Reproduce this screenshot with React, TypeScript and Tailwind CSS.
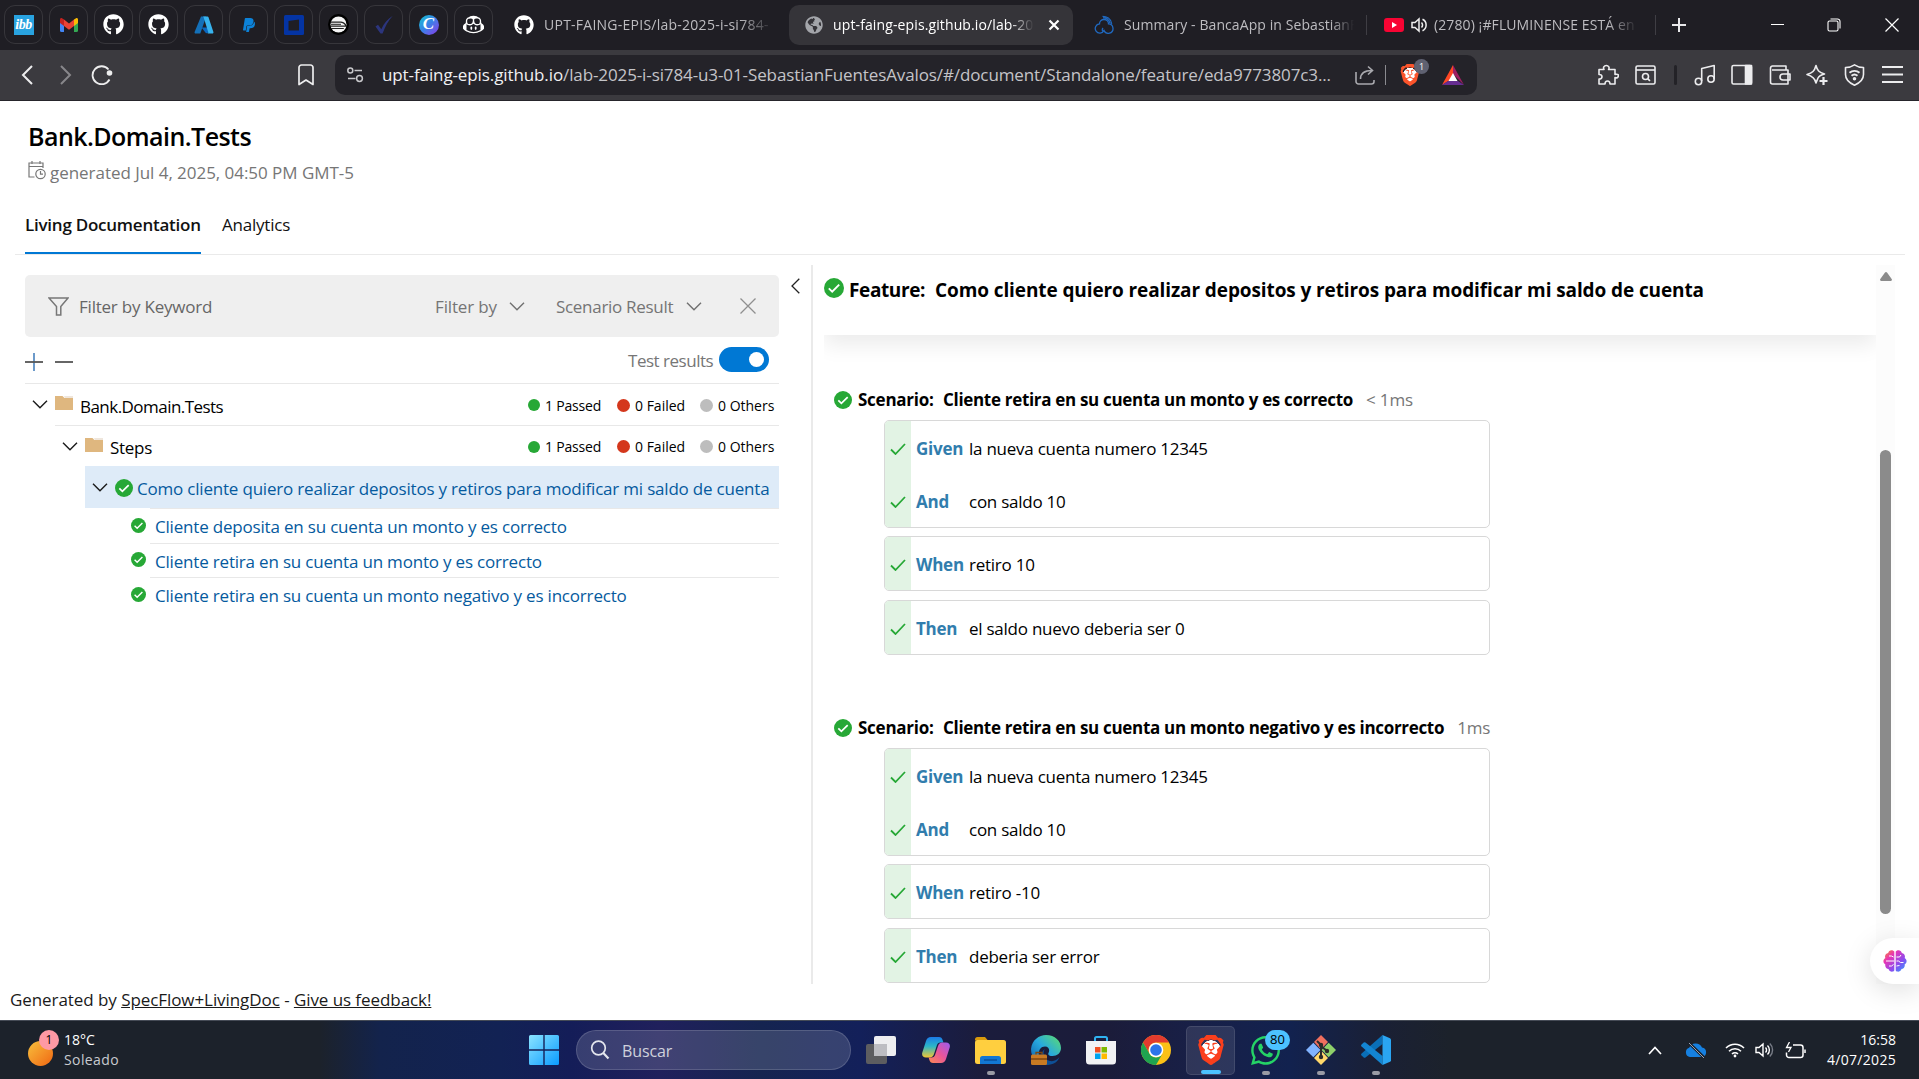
import type { ReactNode } from "react";
import { FaGithub, FaPaypal, FaWhatsapp, FaGlobeAmericas } from "react-icons/fa";
import { SiBrave, SiGithubcopilot } from "react-icons/si";

/* ---------- browser chrome ---------- */

function PinnedTab({ children }: { children: ReactNode }) {
  return (
    <div className="flex size-[39px] shrink-0 items-center justify-center rounded-[11px] border border-[#37363b] text-white">
      {children}
    </div>
  );
}

function GmailIcon() {
  return (
    <svg width="20" height="16" viewBox="0 0 20 16">
      <path d="M1 3v10.500a1.500 1.500 0 0 0 1.500 1.500H5V6z" fill="#4285f4" />
      <path d="M19 3v10.500a1.500 1.500 0 0 1-1.500 1.500H15V6z" fill="#34a853" />
      <path d="M15 2.500 17 1.200c1-.6 2 .2 2 1.300V6l-4 3z" fill="#fbbc04" />
      <path d="M5 2.500 3 1.200C2 .6 1 1.400 1 2.500V6l4 3z" fill="#c5221f" />
      <path d="M5 2.600 10 6.400l5-3.800V9l-5 3.800L5 9z" fill="#ea4335" />
    </svg>
  );
}

function AzureIcon() {
  return (
    <svg width="20" height="18" viewBox="0 0 20 18">
      <path d="M7 .5h5.200L6.300 17.500H1.600c-.8 0-1.300-.7-1-1.500z" fill="#1470b8" />
      <path d="M7.500 11.500h7l1.500 5-4 .8z" fill="#0b68c0" />
      <path d="M8.800.5h4.700c.5 0 .8.3 1 .7L19.400 16c.3.800-.3 1.500-1 1.500h-5.200c.8 0 1.300-.8 1-1.500L9.600 1.200C9.400.8 9.200.5 8.800.5z" fill="#37b3ee" />
    </svg>
  );
}

function TrainIcon() {
  return (
    <svg width="21" height="21" viewBox="0 0 21 21">
      <circle cx="10.500" cy="10.500" r="10.500" fill="#000" />
      <circle cx="10.500" cy="10.500" r="8" fill="#f4f4f4" />
      <path d="M2.500 8.200h10.500c3 .5 4.500 2 5 4H2.800" fill="none" stroke="#222" strokeWidth="1.300" />
      <path d="M3 10.300h10M2.800 14.500h13" stroke="#222" strokeWidth="1" />
    </svg>
  );
}

function CanvaIcon() {
  return (
    <span className="flex size-5 items-center justify-center rounded-full bg-linear-to-br from-[#00c4cc] via-[#3a7de8] to-[#7d2ae8] font-['Liberation_Serif',serif] text-[17px] leading-none font-bold italic">
      <span className="pb-[2px]">C</span>
    </span>
  );
}

function Tab({ icon, title, fade, width, active }: { icon: ReactNode; title: string; fade: string; width: string; active?: boolean }) {
  return (
    <>
      {icon}
      <span className={`${width} shrink-0 overflow-hidden text-[14px] whitespace-nowrap ${active ? "text-white" : "text-[#bdbcc0]"} ${fade}`}>{title}</span>
    </>
  );
}

function TabBar() {
  return (
    <div className="flex h-[50px] items-center bg-[#1f1e24] pb-px pl-1">
      <div className="flex gap-[6px]">
        <PinnedTab>
          <span className="flex size-5 items-center justify-center bg-[#29a3e0] font-['Liberation_Serif',serif] text-[14px] leading-none font-bold tracking-[-0.5px] italic">ibb</span>
        </PinnedTab>
        <PinnedTab><GmailIcon /></PinnedTab>
        <PinnedTab><FaGithub size={21} /></PinnedTab>
        <PinnedTab><FaGithub size={21} /></PinnedTab>
        <PinnedTab><AzureIcon /></PinnedTab>
        <PinnedTab><FaPaypal size={16} color="#0c82d8" /></PinnedTab>
        <PinnedTab>
          <svg width="20" height="20" viewBox="0 0 20 20">
            <rect width="20" height="20" rx="1.500" fill="#0434a4" />
            <path d="M4.500 6 15 4.500v11h-10.500z" fill="#1f1e24" />
          </svg>
        </PinnedTab>
        <PinnedTab><TrainIcon /></PinnedTab>
        <PinnedTab>
          <svg width="20" height="20" viewBox="0 0 20 20">
            <path d="M1.500 11.500 4 9.800l3.300 4.400C10 8.500 13.500 4 18.800.8 14 6 11 12 8.600 18.500H6.500z" fill="#2c357d" />
          </svg>
        </PinnedTab>
        <PinnedTab><CanvaIcon /></PinnedTab>
        <PinnedTab><SiGithubcopilot size={21} /></PinnedTab>
      </div>
      <div className="ml-[21px] flex w-[275px] items-center gap-[10px]">
        <Tab icon={<FaGithub size={20} className="shrink-0 text-white" />} title="UPT-FAING-EPIS/lab-2025-i-si784-" width="w-[230px]" fade="tracking-[0.25px] [mask-image:linear-gradient(to_right,black_85%,transparent)]" />
      </div>
      <div className="flex h-[40px] w-[284px] items-center gap-[10px] rounded-[10px] bg-[#353439] pl-4">
        <Tab icon={<FaGlobeAmericas size={18} className="shrink-0 text-[#a3a5aa]" />} title="upt-faing-epis.github.io/lab-2025" width="w-[201px]" fade="tracking-[0.12px] [mask-image:linear-gradient(to_right,black_88%,transparent)]" active />
        <svg width="12" height="12" viewBox="0 0 12 12" className="ml-[4px]" stroke="#fff" strokeWidth="2.200"><path d="M1.500 1.500l9 9M10.500 1.500l-9 9" /></svg>
      </div>
      <div className="ml-[21px] flex w-[272px] items-center gap-[10px]">
        <svg width="20" height="20" viewBox="0 0 20 20" fill="none" stroke="#2069c0" strokeWidth="1.300" className="shrink-0">
          <path d="M10 15.500a4.600 4.600 0 1 1-4.500-6.600c0-2.600 2-4.400 4.500-4.400s4.500 1.800 4.500 4.400A4.700 4.700 0 1 1 10 15.500c-1.200 2-2.500-.5-1-2.500" />
          <path d="M8.500 1.300c4 0 8.500 2.200 9.200 7.500M9 2.800c3.500 0 6 1.700 7 5.500" />
        </svg>
        <Tab icon={null} title="Summary - BancaApp in SebastianF" width="w-[230px]" fade="tracking-[0.09px] [mask-image:linear-gradient(to_right,black_90%,transparent)]" />
      </div>
      <div className="h-5 w-px bg-[#3f3e44]" />
      <div className="ml-[17px] flex w-[271px] items-center">
        <svg width="20" height="14" viewBox="0 0 20 14" className="shrink-0"><rect width="20" height="14" rx="3" fill="#f80433" /><path d="M8 4v6l5-3z" fill="#fff" /></svg>
        <svg width="16" height="16" viewBox="0 0 16 16" fill="none" stroke="#eee" strokeWidth="1.500" className="mr-[7px] ml-[7px] shrink-0">
          <path d="M1 5.500v5h3l4 3.500V2L4 5.500z" /><path d="M10.500 5.500a3.500 3.500 0 0 1 0 5M11.500 2.300a6.300 6.300 0 0 1 0 11.400" />
        </svg>
        <Tab icon={null} title="(2780) ¡#FLUMINENSE ESTÁ en" width="w-[204px]" fade="tracking-[0.1px] [mask-image:linear-gradient(to_right,black_85%,transparent)]" />
      </div>
      <div className="h-5 w-px bg-[#3f3e44]" />
      <svg width="14" height="14" viewBox="0 0 14 14" className="ml-[16px]" stroke="#e8e8ea" strokeWidth="2"><path d="M7 0v14M0 7h14" /></svg>
      <svg width="14" height="14" viewBox="0 0 14 14" className="ml-[85px]" stroke="#fff"><path d="M0 6.500h13" /></svg>
      <svg width="14" height="14" viewBox="0 0 14 14" className="ml-[42px]" fill="none" stroke="#fff" strokeWidth="1.100"><rect x="1" y="3" width="10" height="10" rx="1.500" /><path d="M3.500 1h7a2.500 2.500 0 0 1 2.500 2.500v7" /></svg>
      <svg width="14" height="14" viewBox="0 0 14 14" className="ml-[44px]" stroke="#fff" strokeWidth="1.200"><path d="M.5.5l13 13M13.500.5l-13 13" /></svg>
    </div>
  );
}

function ToolIcon({ children, className = "" }: { children: ReactNode; className?: string }) {
  return (
    <svg width="22" height="22" viewBox="0 0 22 22" fill="none" stroke="#ececee" strokeWidth="1.600" strokeLinejoin="round" className={`shrink-0 ${className}`}>
      {children}
    </svg>
  );
}

function AddressBar() {
  return (
    <div className="flex h-[51px] items-center border-b border-[#26252b] bg-[#3b3a3f]">
      <svg width="12" height="20" viewBox="0 0 12 20" className="ml-[21px]" fill="none" stroke="#ededee" strokeWidth="2"><path d="M11 1 2 10l9 9" /></svg>
      <svg width="12" height="20" viewBox="0 0 12 20" className="ml-[27px]" fill="none" stroke="#88878b" strokeWidth="2"><path d="M1 1l9 9-9 9" /></svg>
      <svg width="22" height="20" viewBox="0 0 22 20" className="ml-[19px]" fill="none" stroke="#ededee" strokeWidth="1.800"><path d="M18.500 14.500A9 9 0 1 1 17.500 4.500" /><circle cx="18.500" cy="8" r="2.800" fill="#ededee" stroke="none" /></svg>
      <svg width="16" height="22" viewBox="0 0 16 22" className="ml-[185px]" fill="none" stroke="#ededee" strokeWidth="1.700" strokeLinejoin="round"><path d="M1 3.500A2.500 2.500 0 0 1 3.500 1h9A2.500 2.500 0 0 1 15 3.500V20.500L8 16l-7 4.500z" /></svg>

      <div className="ml-[21px] flex h-10 w-[1142px] items-center rounded-[10px] bg-[#242329] pl-[12px]">
        <svg width="17" height="16" viewBox="0 0 17 16" fill="none" stroke="#c8c8cb" strokeWidth="1.500"><circle cx="3.300" cy="3.500" r="2.500" /><path d="M7.500 3.500H15M1 11.500h7.500" /><circle cx="12.500" cy="11.500" r="2.900" /></svg>
        <span className="ml-[18px] w-[973px] text-[17px] tracking-[-0.107px] whitespace-nowrap text-[#c4c4c8]">
          <span className="text-[#f0f0f2]">upt-faing-epis.github.io</span>/lab-2025-i-si784-u3-01-SebastianFuentesAvalos/#/document/Standalone/feature/eda9773807c3...
        </span>
        <svg width="20" height="20" viewBox="0 0 20 20" fill="none" stroke="#a9a9ae" strokeWidth="1.600"><path d="M1 7v9.500A2.500 2.500 0 0 0 3.500 19h13a2.500 2.500 0 0 0 2.500-2.500V15M5.500 14c0-5 3.500-8.500 11.500-8.500M13 1.500l4.500 4-4.500 4" /></svg>
        <div className="ml-[10px] h-5 w-px bg-[#8b8b90]" />
        <div className="relative ml-[13px] size-[22px]">
          <SiBrave size={22} color="#fb542b" className="absolute top-0 left-0 bg-[radial-gradient(circle,white_45%,transparent_46%)]" />
          <span className="absolute -top-[5px] left-[15px] flex size-[15px] items-center justify-center rounded-full bg-[#5f6171] text-[9px] text-white">1</span>
        </div>
        <svg width="22" height="20" viewBox="0 0 22 20" className="ml-[21px]"><path d="M11 0 0 20l11-7z" fill="#ff4724" /><path d="M11 0v9l11 11z" fill="#9e1f63" /><path d="M0 20h22l-6-4H6z" fill="#662d91" /><path d="M11 8 6.500 16h9z" fill="#fff" /></svg>
      </div>

      <ToolIcon className="ml-[120px]"><path d="M2 5.500h5c-.6-1-.7-1.600-.2-2.600a2.900 2.900 0 0 1 5 0c.5 1 .4 1.600-.2 2.600H18v5c3-1 4 .6 3 2.500-.6 1-1.600 1.200-3 .6V20h-5c0-2-1-3-2.500-3S8 18 8 20H2v-5c2 0 3-.8 3-2.300S4 10.500 2 10.500z" /></ToolIcon>
      <ToolIcon className="ml-[16px]"><rect x="1" y="2" width="19" height="18" rx="1.500" /><path d="M1 6h19" /><circle cx="10.500" cy="12.500" r="3" /><path d="m12.800 14.800 2.200 2" /></ToolIcon>
      <div className="ml-[17px] h-5 w-[3px] rounded bg-[#232227]" />
      <ToolIcon className="ml-[17px]"><circle cx="4.500" cy="17.500" r="3.200" /><circle cx="17" cy="15" r="3.200" /><path d="M7.700 17V4.500L20.200 1.500V15" /></ToolIcon>
      <ToolIcon className="ml-[15px]"><rect x="1" y="1.500" width="19.500" height="18.500" rx="1.500" /><rect x="14.500" y="1.500" width="6" height="18.500" fill="#ececee" /></ToolIcon>
      <ToolIcon className="ml-[16px]"><path d="M17 5.500V2H3.500a2 2 0 0 0-2 2v14a2 2 0 0 0 2 2H19V6H3" /><path d="M21 10h-7a3 3 0 0 0 0 6h7z" /></ToolIcon>
      <ToolIcon className="ml-[15px]"><path d="M10 1.500c1.200 5 3 7 8.500 8.500-4 1-5.500 2-6.500 4l-2 5c-1-5-3.500-7-9-8.500 5.500-1.500 7.500-3.500 9-9z" /><path d="M17.500 13v8M13.500 17h8" strokeWidth="2.200" /></ToolIcon>
      <ToolIcon className="ml-[16px]"><path d="M10.500.8c3 2 6 2.700 9 2.700v7c0 5-4 8.500-9 10.700-5-2.200-9-5.700-9-10.700v-7c3 0 6-.7 9-2.700z" /><path d="M5.500 8.800a7.500 7.500 0 0 1 10 0M7.500 11.800a4.600 4.600 0 0 1 6 0" strokeWidth="1.900" /><circle cx="10.500" cy="14.800" r="1" fill="#ececee" /></ToolIcon>
      <ToolIcon className="ml-[16px]"><path d="M0 3h21M0 10.500h21M0 18h21" strokeWidth="2" /></ToolIcon>
    </div>
  );
}

/* ---------- document ---------- */

function PassedIcon({ className }: { className: string }) {
  return (
    <svg viewBox="0 0 20 20" className={`shrink-0 ${className}`}>
      <circle cx="10" cy="10" r="10" fill="#27a836" />
      <path d="m4.800 10.400 3.400 3.300 7-7" fill="none" stroke="#fff" strokeWidth="1.900" />
    </svg>
  );
}

function Chevron({ className, color = "#1a1a1a" }: { className?: string; color?: string }) {
  return (
    <svg width="16" height="9" viewBox="0 0 16 9" className={`shrink-0 ${className ?? ""}`} fill="none" stroke={color} strokeWidth="1.400">
      <path d="M1 .8l7 7 7-7" />
    </svg>
  );
}

function Folder() {
  return (
    <svg width="18" height="14" viewBox="0 0 18 14" className="-mt-[3px] ml-[7px] shrink-0">
      <path d="M0 0h7.500l2 2H18v12H0z" fill="#dfb77f" />
      <path d="M9 0h9v2H10z" fill="#efe6dc" />
    </svg>
  );
}

function Counts() {
  return (
    <div className="ml-auto flex items-center pt-px pr-[4px] text-[14px] whitespace-nowrap text-black">
      <span className="size-[12px] rounded-full bg-[#27a836]" />
      <span className="ml-[5px] w-[58px] tracking-[-0.2px]">1 Passed</span>
      <span className="ml-[14px] size-[13px] rounded-full bg-[#d4371c]" />
      <span className="ml-[5px] w-[50px]">0 Failed</span>
      <span className="ml-[15px] size-[13px] rounded-full bg-[#bdbdbd]" />
      <span className="ml-[5px] w-[57px]">0 Others</span>
    </div>
  );
}

const scenarioNames = [
  "Cliente deposita en su cuenta un monto y es correcto",
  "Cliente retira en su cuenta un monto y es correcto",
  "Cliente retira en su cuenta un monto negativo y es incorrecto",
];

function TreePanel() {
  return (
    <div className="flex w-[779px] shrink-0 flex-col pt-[10px] pl-[25px]">
      <div className="flex h-[62px] items-center rounded-[5px] bg-[#efefef] pl-[23px] text-[17px] text-[#666]">
        <svg width="21" height="19" viewBox="0 0 21 19" fill="none" stroke="#777" strokeWidth="1.500"><path d="M1 1h19L12.800 9.500V18H8.500V9.500z" /></svg>
        <span className="ml-[10px] w-[356px] pt-[2px] tracking-[-0.22px]">Filter by Keyword</span>
        <span className="w-[63px] pt-[2px] tracking-[-0.14px] text-[#757575]">Filter by</span>
        <Chevron className="ml-[11px]" color="#707070" />
        <span className="ml-[31px] w-[119px] pt-[2px] tracking-[-0.3px] whitespace-nowrap text-[#757575]">Scenario Result</span>
        <Chevron className="ml-[11px]" color="#707070" />
        <svg width="16" height="16" viewBox="0 0 16 16" className="ml-[38px]" stroke="#8f8f8f" strokeWidth="1.300"><path d="M.5.5l15 15M15.500.5l-15 15" /></svg>
      </div>
      <div className="flex h-[47px] items-center border-b border-[#e8e8e8] pb-px">
        <svg width="18" height="18" viewBox="0 0 18 18" className="mt-[4px]"><path d="M9 0v18" stroke="#3b78b8" strokeWidth="1.500" /><path d="M0 9h18" stroke="#555" strokeWidth="1.800" /></svg>
        <svg width="18" height="18" viewBox="0 0 18 18" className="mt-[4px] ml-[12px]"><path d="M0 9h18" stroke="#555" strokeWidth="1.800" /></svg>
        <span className="ml-auto w-[85px] pt-[2px] text-[17px] tracking-[-0.48px] whitespace-nowrap text-[#767676]">Test results</span>
        <span className="mr-[10px] ml-[6px] flex h-[25px] w-[50px] items-center justify-end rounded-full bg-[#0078d4] pr-[5px]">
          <span className="size-[15px] rounded-full bg-white" />
        </span>
      </div>
      <div className="flex h-[41px] items-center pl-[7px] text-[17px] text-black">
        <Chevron />
        <Folder />
        <span className="ml-[7px] pt-[5px] tracking-[-0.54px]">Bank.Domain.Tests</span>
        <Counts />
      </div>
      <div className="ml-[30px] flex h-[41px] items-center border-t border-[#e8e8e8] pl-[7px] text-[17px] text-black">
        <Chevron />
        <Folder />
        <span className="ml-[7px] pt-[4px] tracking-[-0.28px]">Steps</span>
        <Counts />
      </div>
      <div className="ml-[60px] flex h-[42px] items-center bg-[#deebf8] pl-[7px] text-[17px] text-[#055a9e]">
        <Chevron />
        <PassedIcon className="mt-px ml-[7px] size-[18px]" />
        <span className="ml-[4px] pt-[3px] tracking-[-0.2px] whitespace-nowrap">{"Como cliente quiero realizar depositos y retiros para modificar mi saldo de cuenta"}</span>
      </div>
      {scenarioNames.map((name) => (
        <div key={name} className="ml-[125px] flex h-[34.500px] items-center border-t border-[#e8e8e8] pt-[2px] text-[17px] text-[#055a9e]">
          <div className="-ml-[19px] flex items-center">
            <PassedIcon className="-mt-[3px] size-[15px]" />
            <span className="ml-[9px] tracking-[-0.19px] whitespace-nowrap">{name}</span>
          </div>
        </div>
      ))}
    </div>
  );
}

type Step = [string, string];

function StepBox({ steps, className = "" }: { steps: Step[]; className?: string }) {
  return (
    <div className={`ml-[60px] w-[606px] overflow-hidden rounded-[5px] border border-[#d8d8d8] ${className}`}>
      {steps.map(([keyword, text]) => (
        <div key={keyword} className="flex h-[53px] items-center text-[17px] whitespace-nowrap text-black">
          <div className="flex h-full w-[26px] items-center justify-center bg-[#e2f3e4] pt-[3px]">
            <svg width="16" height="12" viewBox="0 0 16 12" fill="none" stroke="#27a836" strokeWidth="1.800"><path d="M1 6.500 5.500 11 15 1" /></svg>
          </div>
          <span className="ml-[5px] w-[53px] pt-[3px] font-bold tracking-[-0.25px] text-[#317dad]">{keyword}</span>
          <span className="pt-[3px] tracking-[-0.25px]">{text}</span>
        </div>
      ))}
    </div>
  );
}

function Scenario({ name, time, steps }: { name: string; time: string; steps: [Step[], Step[], Step[]] }) {
  return (
    <section>
      <div className="ml-[10px] flex h-[38px] items-center pb-[2px] text-[17px] whitespace-nowrap text-black">
        <PassedIcon className="size-[18px]" />
        <span className="ml-[6px] w-[85px] font-bold tracking-[-0.25px]">Scenario:</span>
        <span className="font-bold tracking-[-0.315px]">{name}</span>
        <span className="ml-[13px] tracking-[-0.141px] text-[#767676]">{time}</span>
      </div>
      <StepBox steps={steps[0]} />
      <StepBox steps={steps[1]} className="mt-2" />
      <StepBox steps={steps[2]} className="mt-[9px]" />
    </section>
  );
}

function FeaturePanel() {
  return (
    <div className="flex h-[719px] w-[1063px] shrink-0 flex-col overflow-hidden">
      <div className="flex h-full flex-col overflow-hidden pl-[11px]">
        <div className="relative z-10 flex h-[70px] shrink-0 items-start bg-white shadow-[0_10px_20px_rgba(0,0,0,0.08)] [clip-path:inset(0_0_-40px_0)]">
          <div className="flex h-[50px] items-center text-[19px] font-bold whitespace-nowrap text-black">
            <PassedIcon className="-mt-[4px] size-[20px]" />
            <span className="ml-[5px] w-[86px] tracking-[-0.38px]">Feature:</span>
            <span className="tracking-[-0.102px]">{"Como cliente quiero realizar depositos y retiros para modificar mi saldo de cuenta"}</span>
          </div>
        </div>
        <div className="flex flex-col gap-[55px] pt-[47px]">
          <Scenario
            name="Cliente retira en su cuenta un monto y es correcto"
            time="< 1ms"
            steps={[[["Given", "la nueva cuenta numero 12345"], ["And", "con saldo 10"]], [["When", "retiro 10"]], [["Then", "el saldo nuevo deberia ser 0"]]]}
          />
          <Scenario
            name="Cliente retira en su cuenta un monto negativo y es incorrecto"
            time="1ms"
            steps={[[["Given", "la nueva cuenta numero 12345"], ["And", "con saldo 10"]], [["When", "retiro -10"]], [["Then", "deberia ser error"]]]}
          />
        </div>
      </div>
    </div>
  );
}

function BrainIcon() {
  return (
    <svg width="24" height="24" viewBox="0 0 24 24">
      <defs>
        <linearGradient id="brain" x1="0" y1="0" x2="1" y2="1">
          <stop offset="0" stopColor="#f7941d" /><stop offset=".3" stopColor="#e935b4" /><stop offset=".65" stopColor="#8a4df0" /><stop offset="1" stopColor="#25a8ff" />
        </linearGradient>
      </defs>
      <path d="M11.300 2.500C9 0 5.500 1.500 5.200 4 2.500 4.500 1.500 7 2.300 9-.2 10.500-.2 14 2.300 15.300 1.800 18 3.500 19.800 5.500 20c1 3 4.500 3.500 5.800 1.500zM12.700 2.500C15 0 18.500 1.500 18.800 4c2.700.5 3.700 3 2.900 5 2.500 1.500 2.500 5 0 6.300.5 2.700-1.200 4.500-3.200 4.700-1 3-4.500 3.500-5.800 1.500z" fill="url(#brain)" />
      <path d="M3 12h8M6 7h2.500l2 1M6 17h2.500l2-1.500M13.500 8h3l1.500-2M13.500 12h2l2 1.500h3M13.500 17l3-.5" stroke="#fff" strokeWidth="1" fill="none" />
    </svg>
  );
}

function DocumentPage() {
  return (
    <main className="relative flex h-[919px] flex-col overflow-hidden bg-white">
      <div className="flex h-[90px] flex-col pl-[28px]">
        <h1 className="mt-[17px] h-[36px] text-[25px] leading-[36px] font-semibold tracking-[-0.55px] text-black">Bank.Domain.Tests</h1>
        <div className="mt-[4px] flex h-[28px] items-center text-[17px] text-[#767676]">
          <svg width="18" height="19" viewBox="0 0 18 19" fill="none" stroke="#777" strokeWidth="1.200" className="-mt-[3px]"><path d="M6.500 16H1V2h14v5M1 5.500h14M4 0v3M12 0v3" /><circle cx="12.500" cy="13" r="4.700" /><path d="M12.500 10v3.200h2.500" /></svg>
          <span className="ml-[4px] pt-[2px] tracking-[-0.04px]">generated Jul 4, 2025, 04:50 PM GMT-5</span>
        </div>
      </div>
      <div className="mr-[14px] ml-[15px] flex h-[64px] items-stretch border-b border-[#eaeaea] pl-[10px] text-[17px] text-[#111]">
        <div className="flex w-[176px] items-center border-b-2 border-[#0078d4] pb-[2px] font-semibold tracking-[-0.24px] whitespace-nowrap">
          <span className="pt-[8px]">Living Documentation</span>
        </div>
        <div className="ml-[21px] flex items-center tracking-[-0.22px]"><span className="pt-[4px]">Analytics</span></div>
      </div>
      <div className="mt-[10px] flex h-[719px]">
        <TreePanel />
        <div className="flex w-[34px] shrink-0 justify-end border-r-2 border-[#eaeaea]">
          <svg width="9" height="16" viewBox="0 0 9 16" className="mt-[13px] mr-[11px]" fill="none" stroke="#222" strokeWidth="1.300"><path d="M8.300.7 1 8l7.300 7.300" /></svg>
        </div>
        <FeaturePanel />
        <div className="flex w-[19px] shrink-0 flex-col items-center bg-[#fcfcfc]">
          <svg width="12" height="9" viewBox="0 0 12 9" className="mt-[7px]"><path d="M6 0c.5 0 .8.200 1 .5l4.700 6.500c.6 1 .1 2-.9 2H1.200c-1 0-1.500-1-.9-2L5 .5C5.200.2 5.500 0 6 0z" fill="#8b8b8b" /></svg>
          <div className="mt-[169px] h-[464px] w-[11px] rounded-full bg-[#8b8b8b]" />
        </div>
      </div>
      <footer className="flex h-[32px] items-center pl-[10px] text-[17px] tracking-[-0.07px] text-[#1a1a1a]">
        <p>Generated by <a className="underline">SpecFlow+LivingDoc</a> - <a className="underline">Give us feedback!</a></p>
      </footer>
      <div className="absolute top-[837px] right-0 z-20 flex h-[46px] w-[49px] items-center rounded-l-full bg-white pl-[13px] shadow-[0_6px_28px_rgba(0,0,0,0.13)]">
        <BrainIcon />
      </div>
    </main>
  );
}

/* ---------- taskbar ---------- */

function TaskButton({ children, dot, active }: { children: ReactNode; dot?: boolean; active?: boolean }) {
  return (
    <div className={`relative flex h-[49px] w-[49px] items-center justify-center rounded-[5px] ${active ? "border border-white/10 bg-white/10" : ""}`}>
      {children}
      {dot && <span className="absolute bottom-0 h-[4px] w-[8px] rounded-full bg-[#9a9ba5]" />}
      {active && <span className="absolute bottom-0 h-[4px] w-[20px] rounded-full bg-[#4cc2ff]" />}
    </div>
  );
}

function Taskbar() {
  return (
    <div className="flex h-[59px] items-center border-t border-[#454b56] bg-[linear-gradient(to_right,#1c222b_0,#1c222b_320px,#13234c_380px,#122254_500px,#141d58_570px,#20205c_660px,#152450_760px,#13205a_860px,#1b1c3c_980px,#1b1c3a_1110px,#182048_1200px,#12224f_1290px,#1a2035_1380px,#1c222b_1450px)] text-white">
      <div className="relative ml-[28px] h-[36px] w-[31px] shrink-0">
        <span className="absolute top-[9px] left-0 size-[25px] rounded-full bg-linear-to-br from-[#f6bf3c] to-[#ee6410]" />
        <span className="absolute -top-[2px] left-[11px] flex size-[20px] items-center justify-center rounded-full bg-[#ff99a4] text-[12px] text-black">1</span>
      </div>
      <div className="ml-[5px] w-[465px] text-[14px] leading-[20px]">
        <div>18°C</div>
        <div className="tracking-[0.4px] text-[#c9cbd0]">Soleado</div>
      </div>
      <svg width="30" height="30" viewBox="0 0 30 30" className="shrink-0">
        <defs><linearGradient id="win" x1="0" y1="0" x2="1" y2="1"><stop offset="0" stopColor="#8be4ff" /><stop offset="1" stopColor="#0a9bff" /></linearGradient></defs>
        <path d="M0 1.500A1.500 1.500 0 0 1 1.500 0H14.300V14.300H0zM15.700 0H28.500A1.500 1.500 0 0 1 30 1.500V14.300H15.700zM0 15.700h14.300V30H1.500A1.500 1.500 0 0 1 0 28.500zM15.700 15.700H30V28.500A1.500 1.500 0 0 1 28.500 30H15.700z" fill="url(#win)" />
      </svg>
      <div className="ml-[17px] flex h-[40px] w-[275px] shrink-0 items-center rounded-full border border-white/15 bg-white/15 pl-[13px]">
        <svg width="20" height="20" viewBox="0 0 20 20" fill="none" stroke="#e4e6ee" strokeWidth="1.700"><circle cx="8.500" cy="8" r="6.800" /><path d="m13.300 13 5.200 5.500" strokeWidth="2.200" /></svg>
        <span className="ml-[12px] pt-px text-[16px] tracking-[-0.1px] text-[#cfd1dc]">Buscar</span>
      </div>
      <div className="ml-[5px] flex gap-[6px]">
        <TaskButton>
          <svg width="30" height="28" viewBox="0 0 30 28"><rect x="0" y="8" width="21" height="20" rx="2" fill="#5d5d60" /><rect x="8" y="0" width="22" height="20" rx="2" fill="#eeeef0" /><rect x="8" y="8" width="13" height="12" fill="#bdbdc2" /></svg>
        </TaskButton>
        <TaskButton>
          <svg width="28" height="26" viewBox="0 0 28 26">
            <defs>
              <linearGradient id="cpa" x1="0" y1="0" x2="0" y2="1"><stop offset="0" stopColor="#1c7be8" /><stop offset=".45" stopColor="#2bb6c8" /><stop offset="1" stopColor="#f2c632" /></linearGradient>
              <linearGradient id="cpb" x1="1" y1="0" x2="0" y2="1"><stop offset="0" stopColor="#9a5cf0" /><stop offset=".5" stopColor="#e8559a" /><stop offset="1" stopColor="#ff8a50" /></linearGradient>
            </defs>
            <path d="M9 0h8c2 0 3 1 3.600 3l.8 2.500h-3c-2 0-3 1-3.600 3L12 17c-.8 2-2 3.500-4 3.500H4c-3 0-4.500-2-3.700-5L4 4c.8-2.500 2.500-4 5-4z" fill="url(#cpa)" />
            <path d="M19 26h-8c-2 0-3-1-3.600-3l-.8-2.500h3c2 0 3-1 3.600-3L16 9c.8-2 2-3.500 4-3.500h4c3 0 4.500 2 3.700 5L24 22c-.8 2.500-2.500 4-5 4z" fill="url(#cpb)" />
          </svg>
        </TaskButton>
        <TaskButton dot>
          <svg width="31" height="27" viewBox="0 0 31 27"><path d="M0 2.500A2.500 2.500 0 0 1 2.500 0H10l3 3.500h-13z" fill="#d99a0c" /><rect y="3" width="31" height="24" rx="2.500" fill="#ffcf3f" /><path d="M5 27v-5.500A2.500 2.500 0 0 1 7.500 19h16a2.500 2.500 0 0 1 2.500 2.500V27z" fill="#1277d4" /><path d="M9 23h13" stroke="#0a4f9c" strokeWidth="1.500" /></svg>
        </TaskButton>
        <TaskButton>
          <svg width="30" height="30" viewBox="0 0 30 30">
            <defs><linearGradient id="edge" x1="0" y1="1" x2="1" y2="0"><stop offset="0" stopColor="#0c59a4" /><stop offset=".5" stopColor="#27a8e0" /><stop offset="1" stopColor="#5fe06a" /></linearGradient></defs>
            <path d="M0 14C1 5 8 0 15 0c9 0 15 6 15 13 0 5-4 8-8.500 8-3.500 0-5-1.500-4-3 1.500-2.500.5-6.500-3.500-6.500-5 0-7 5-6 10 1 4 4 7 8 8.200C7 31 0 24 0 14z" fill="url(#edge)" />
            <path d="M14 14c-3 4-1 11 5 12 4 .7 7-1 9.500-4-2 6-7.500 8-13.500 8C9 28 8 18 14 14z" fill="#0e4f96" />
            <rect x="0" y="19.500" width="16" height="10.500" rx="1.500" fill="#c97a23" /><path d="M5 19.500v-2h6v2M0 24h16" stroke="#7d4510" strokeWidth="1.300" fill="none" />
          </svg>
        </TaskButton>
        <TaskButton>
          <svg width="30" height="30" viewBox="0 0 30 30"><path d="M9 6V3.500A1.500 1.500 0 0 1 10.500 2h9A1.500 1.500 0 0 1 21 3.500V6" fill="none" stroke="#2fb2f0" strokeWidth="2" /><path d="M0 6h30v20a3.500 3.500 0 0 1-3.500 3.500h-23A3.500 3.500 0 0 1 0 26z" fill="#f2f2f4" /><path d="M9 12h5.500v5.500H9z" fill="#f25022" /><path d="M15.500 12H21v5.500h-5.500z" fill="#7fba00" /><path d="M9 18.500h5.500V24H9z" fill="#00a4ef" /><path d="M15.500 18.500H21V24h-5.500z" fill="#ffb900" /></svg>
        </TaskButton>
        <TaskButton>
          <svg width="30" height="30" viewBox="0 0 30 30"><circle cx="15" cy="15" r="15" fill="#fbc116" /><path d="M2 7.500A15 15 0 0 1 28 7.500H15A7.500 7.500 0 0 0 8.500 18.700z" fill="#e33b2e" /><path d="M2 7.500A15 15 0 0 0 15 30l6.500-11.300A7.500 7.500 0 0 1 8.500 18.700z" fill="#1fa350" /><circle cx="15" cy="15" r="7.300" fill="#fff" /><circle cx="15" cy="15" r="5.800" fill="#2c74e8" /></svg>
        </TaskButton>
        <TaskButton active>
          <SiBrave size={30} color="#fb3f1c" className="bg-[radial-gradient(circle,white_45%,transparent_46%)]" />
        </TaskButton>
        <TaskButton dot>
          <FaWhatsapp size={33} color="#25d366" />
          <span className="absolute top-[4px] left-[24px] flex h-[20px] w-[25px] items-center justify-center rounded-full bg-[#4cc2ff] text-[13px] text-black">80</span>
        </TaskButton>
        <TaskButton dot>
          <svg width="30" height="30" viewBox="0 0 30 30">
            <path d="M15 0 22 7 15 14.500 8 7z" fill="#ef6f5e" /><path d="M7.300 7.700 14.500 15 7.300 22.300 0 15z" fill="#80b3ff" /><path d="M22.700 7.700 30 15l-7.300 7.300L15.500 15z" fill="#8ed06a" /><path d="M15 15.500 22 23l-7 7-7-7z" fill="#ffd86b" />
            <path d="M11 6l4 4v12M15 11l6 5" stroke="#2b2b2b" strokeWidth="2" fill="none" /><circle cx="15" cy="22" r="2.200" fill="#2b2b2b" /><circle cx="15" cy="10" r="2.200" fill="#2b2b2b" /><circle cx="21" cy="16" r="2.200" fill="#2b2b2b" />
          </svg>
        </TaskButton>
        <TaskButton dot>
          <svg width="30" height="30" viewBox="0 0 30 30"><path d="M21.500 0v9L4.500 22.500a1.500 1.500 0 0 1-1.800 0L.6 20.600a1.400 1.400 0 0 1 0-2z" fill="#0a6fb8" /><path d="M21.500 30v-9L4.500 7.500a1.500 1.500 0 0 0-1.800 0L.6 9.400a1.400 1.400 0 0 0 0 2z" fill="#1385d2" /><path d="M21.500 0 29 3.200a1.800 1.800 0 0 1 1 1.600v20.400a1.800 1.800 0 0 1-1 1.600L21.500 30z" fill="#2aa5f2" /></svg>
        </TaskButton>
      </div>
      <div className="ml-auto flex items-center pr-[23px]">
        <svg width="14" height="9" viewBox="0 0 14 9" fill="none" stroke="#fff" strokeWidth="1.700"><path d="m1 8 6-6.500L13 8" /></svg>
        <svg width="22" height="18" viewBox="0 0 22 18" className="ml-[23px]"><path d="M5 16a4.800 4.800 0 0 1-.8-9.300A7 7 0 0 1 17 6.500 4.800 4.800 0 0 1 17 16z" fill="#1680e0" /><path d="M3.500 1.500l16 15.500" stroke="#1c222b" strokeWidth="3" /><path d="M4 2l15 15" stroke="#9aa4b2" strokeWidth="1" /></svg>
        <svg width="20" height="16" viewBox="0 0 20 16" className="ml-[18px]" fill="none" stroke="#fff" strokeWidth="1.600"><path d="M1 6a12.700 12.700 0 0 1 18 0M4 9.200a8.500 8.500 0 0 1 12 0M7 12a4.300 4.300 0 0 1 6 0" /><circle cx="10" cy="14" r="1.400" fill="#fff" stroke="none" /></svg>
        <svg width="19" height="16" viewBox="0 0 19 16" className="ml-[10px]" fill="none" stroke="#fff" strokeWidth="1.400"><path d="M1 5.500v5h3l4 3.500V2L4 5.500zM10.500 5.500a3.500 3.500 0 0 1 0 5M12.500 3.500a6.300 6.300 0 0 1 0 9" /><path d="M14.800 1.500a9 9 0 0 1 0 13" stroke="#777c86" /></svg>
        <svg width="21" height="17" viewBox="0 0 21 17" className="ml-[11px]" fill="none" stroke="#fff" strokeWidth="1.500"><path d="M8 3h7.500a2.500 2.500 0 0 1 2.500 2.500v7.500a2.500 2.500 0 0 1-2.500 2.500H4A2.500 2.500 0 0 1 1.500 13v-2.500M20 7.500v3.500" /><path d="M4.500 0 1.500 5.500H6L3.500 10" strokeWidth="1.300" /></svg>
        <div className="ml-[19px] w-[71px] text-right text-[14px] leading-[20px]">
          <div>16:58</div>
          <div className="tracking-[0.3px]">4/07/2025</div>
        </div>
      </div>
    </div>
  );
}

export default function App() {
  return (
    <div className="h-[1079px] w-[1919px] overflow-hidden bg-white font-['Open_Sans',sans-serif]">
      <TabBar />
      <AddressBar />
      <DocumentPage />
      <Taskbar />
    </div>
  );
}
